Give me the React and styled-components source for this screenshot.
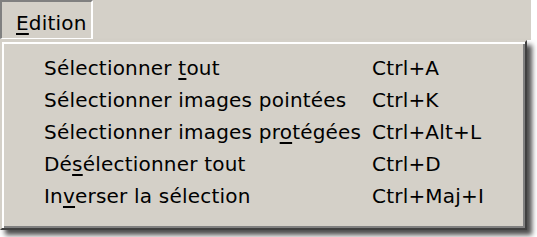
import React from "react";
import styled, { createGlobalStyle } from "styled-components";

const GlobalStyle = createGlobalStyle`
  html, body {
    margin: 0;
    padding: 0;
    background: #ffffff;
  }
  body {
    font-family: "DejaVu Sans", Verdana, sans-serif;
    font-size: 20px;
    letter-spacing: 0.2px;
    color: #000;
  }
`;

const items = [
  { label: ["Sélectionner ", "t", "out"], key: "Ctrl+A" },
  { label: ["Sélectionner images pointées", "", ""], key: "Ctrl+K" },
  { label: ["Sélectionner images pr", "o", "tégées"], key: "Ctrl+Alt+L" },
  { label: ["Dé", "s", "électionner tout"], key: "Ctrl+D" },
  { label: ["In", "v", "erser la sélection"], key: "Ctrl+Maj+I" },
];

const Menu = () => {
  return (
    <Screen>
      <MenuBar>
        <BarItem>
          <u>E</u>dition
        </BarItem>
      </MenuBar>
      <Popup>
        <List>
          {items.map((it) => (
            <Row key={it.key}>
              <Label>
                {it.label[0]}
                {it.label[1] && <u>{it.label[1]}</u>}
                {it.label[2]}
              </Label>
              <Shortcut>{it.key}</Shortcut>
            </Row>
          ))}
        </List>
      </Popup>
    </Screen>
  );
};

const Screen = styled.div`
  width: 537px;
  height: 237px;
  overflow: hidden;
  background: #ffffff;
`;

const MenuBar = styled.div`
  width: 531px;
  height: 40px;
  background: #d4d0c8;
  display: flex;
  align-items: flex-start;
`;

const BarItem = styled.div`
  box-sizing: border-box;
  height: 39px;
  width: 93px;
  border-top: 2px solid #808080;
  border-left: 2px solid #808080;
  border-right: 2px solid #ffffff;
  border-bottom: 1px solid #ffffff;
  padding: 7px 0 0 14px;
  line-height: 28px;
  u {
    text-decoration-thickness: 2px;
    text-underline-offset: 3px;
  }
`;

const Popup = styled.div`
  box-sizing: border-box;
  width: 527px;
  height: 190px;
  background: #d4d0c8;
  border-top: 2px solid #d4d0c8;
  border-left: 2px solid #d4d0c8;
  border-right: 2px solid #404040;
  border-bottom: 2px solid #404040;
  box-shadow: inset 2px 2px 0 #ffffff, inset -2px -2px 0 #808080,
    5px 5px 5px rgba(0, 0, 0, 0.7);
`;

const List = styled.div`
  padding: 10px 0 0 42px;
  display: flex;
  flex-direction: column;
`;

const Row = styled.div`
  display: grid;
  grid-template-columns: 328px 1fr;
  height: 32px;
  line-height: 32px;
  u {
    text-decoration-thickness: 2px;
    text-underline-offset: 3px;
  }
`;

const Label = styled.span`
  white-space: nowrap;
`;

const Shortcut = styled.span`
  white-space: nowrap;
`;

export default function App() {
  return (
    <>
      <GlobalStyle />
      <Menu />
    </>
  );
}
